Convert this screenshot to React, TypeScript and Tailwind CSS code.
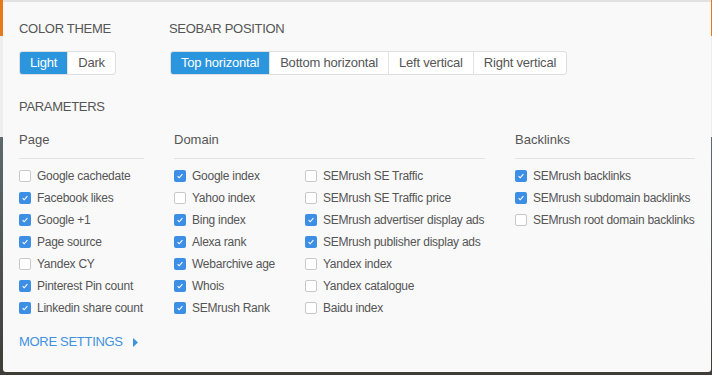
import React from "react";

type Item = [string, boolean];

const pageItems: Item[] = [
  ["Google cachedate", false],
  ["Facebook likes", true],
  ["Google +1", true],
  ["Page source", true],
  ["Yandex CY", false],
  ["Pinterest Pin count", true],
  ["Linkedin share count", true],
];

const domainA: Item[] = [
  ["Google index", true],
  ["Yahoo index", false],
  ["Bing index", true],
  ["Alexa rank", true],
  ["Webarchive age", true],
  ["Whois", true],
  ["SEMrush Rank", true],
];

const domainB: Item[] = [
  ["SEMrush SE Traffic", false],
  ["SEMrush SE Traffic price", false],
  ["SEMrush advertiser display ads", true],
  ["SEMrush publisher display ads", true],
  ["Yandex index", false],
  ["Yandex catalogue", false],
  ["Baidu index", false],
];

const backlinks: Item[] = [
  ["SEMrush backlinks", true],
  ["SEMrush subdomain backlinks", true],
  ["SEMrush root domain backlinks", false],
];

function Checkbox({ checked }: { checked: boolean }) {
  if (checked) {
    return (
      <span className="flex h-[12px] w-[12px] shrink-0 items-center justify-center rounded-[2px] bg-[#3d8fe6]">
        <svg width="8" height="8" viewBox="0 0 8 8" fill="none">
          <path d="M1.6 4.2 L3.2 5.8 L6.4 2.2" stroke="#fff" strokeWidth="1.1" />
        </svg>
      </span>
    );
  }
  return <span className="h-[12px] w-[12px] shrink-0 rounded-[2px] border border-[#c9c9c9] bg-white" />;
}

function CheckList({ items }: { items: Item[] }) {
  return (
    <div className="flex flex-col">
      {items.map(([label, checked]) => (
        <div key={label} className="flex h-[22px] items-center gap-[6px] whitespace-nowrap">
          <Checkbox checked={checked} />
          <span className="text-[12px] tracking-[-0.25px] text-[#555]">{label}</span>
        </div>
      ))}
    </div>
  );
}

function Segmented({ options, active }: { options: string[]; active: number }) {
  return (
    <div className="flex h-[24px] w-fit overflow-hidden rounded-[3px] border border-[#dedede] bg-white">
      {options.map((opt, i) => (
        <span
          key={opt}
          className={
            i === active
              ? "flex items-center bg-[#2b95de] px-[10px] text-[13px] tracking-[-0.2px] text-white"
              : "flex items-center border-l border-[#e3e3e3] px-[10px] text-[13px] tracking-[-0.2px] text-[#555]"
          }
        >
          {opt}
        </span>
      ))}
    </div>
  );
}

function Column({ title, width, children }: { title: string; width: string; children: React.ReactNode }) {
  return (
    <div className={width}>
      <div className="text-[13px] leading-[16px] text-[#555]">{title}</div>
      <div className="mt-[10px] h-px bg-[#e2e2e2]" />
      <div className="mt-[6px]">{children}</div>
    </div>
  );
}

export default function App() {
  return (
    <div
      className="h-[376px] w-[719px] bg-white"
      style={{ fontFamily: '"Liberation Sans", Arial, sans-serif' }}
    >
      <div className="relative h-[375px] w-[712px] bg-[linear-gradient(to_bottom,#e8781c_0px,#e8781c_36px,#eeeeee_36px,#eeeeee_137px,#5f6a6e_137px,#3e3d37_100%)]">
        {/* Settings popup */}
        <div className="absolute left-[3px] top-0 h-[372px] w-[708px] rounded-b-[3px] border-t-2 border-[#e2e2e2] bg-[#f9f9f9] px-[16px] pt-[19px]">
          <div className="flex">
            <div className="w-[151px]">
              <div className="text-[13px] leading-[16px] tracking-[-0.3px] text-[#555]">COLOR THEME</div>
              <div className="mt-[14px]">
                <Segmented options={["Light", "Dark"]} active={0} />
              </div>
            </div>
            <div>
              <div className="-ml-px text-[13px] leading-[16px] tracking-[-0.3px] text-[#555]">SEOBAR POSITION</div>
              <div className="mt-[14px]">
                <Segmented
                  options={["Top horizontal", "Bottom horizontal", "Left vertical", "Right vertical"]}
                  active={0}
                />
              </div>
            </div>
          </div>

          <div className="mt-[24px] text-[13px] leading-[16px] tracking-[-0.3px] text-[#555]">PARAMETERS</div>

          <div className="mt-[17px] flex gap-[30px]">
            <Column title="Page" width="w-[125px]">
              <CheckList items={pageItems} />
            </Column>
            <Column title="Domain" width="w-[311px]">
              <div className="flex">
                <div className="w-[131px]">
                  <CheckList items={domainA} />
                </div>
                <CheckList items={domainB} />
              </div>
            </Column>
            <Column title="Backlinks" width="w-[180px]">
              <CheckList items={backlinks} />
            </Column>
          </div>

          <div className="mt-[15px] flex items-center gap-[10px] text-[13px] leading-[16px] tracking-[-0.3px] text-[#3f92e0]">
            <span>MORE SETTINGS</span>
            <svg width="5" height="9" viewBox="0 0 5 9">
              <path d="M0 0 L5 4.5 L0 9 Z" fill="#3f92e0" />
            </svg>
          </div>
        </div>
      </div>
    </div>
  );
}
